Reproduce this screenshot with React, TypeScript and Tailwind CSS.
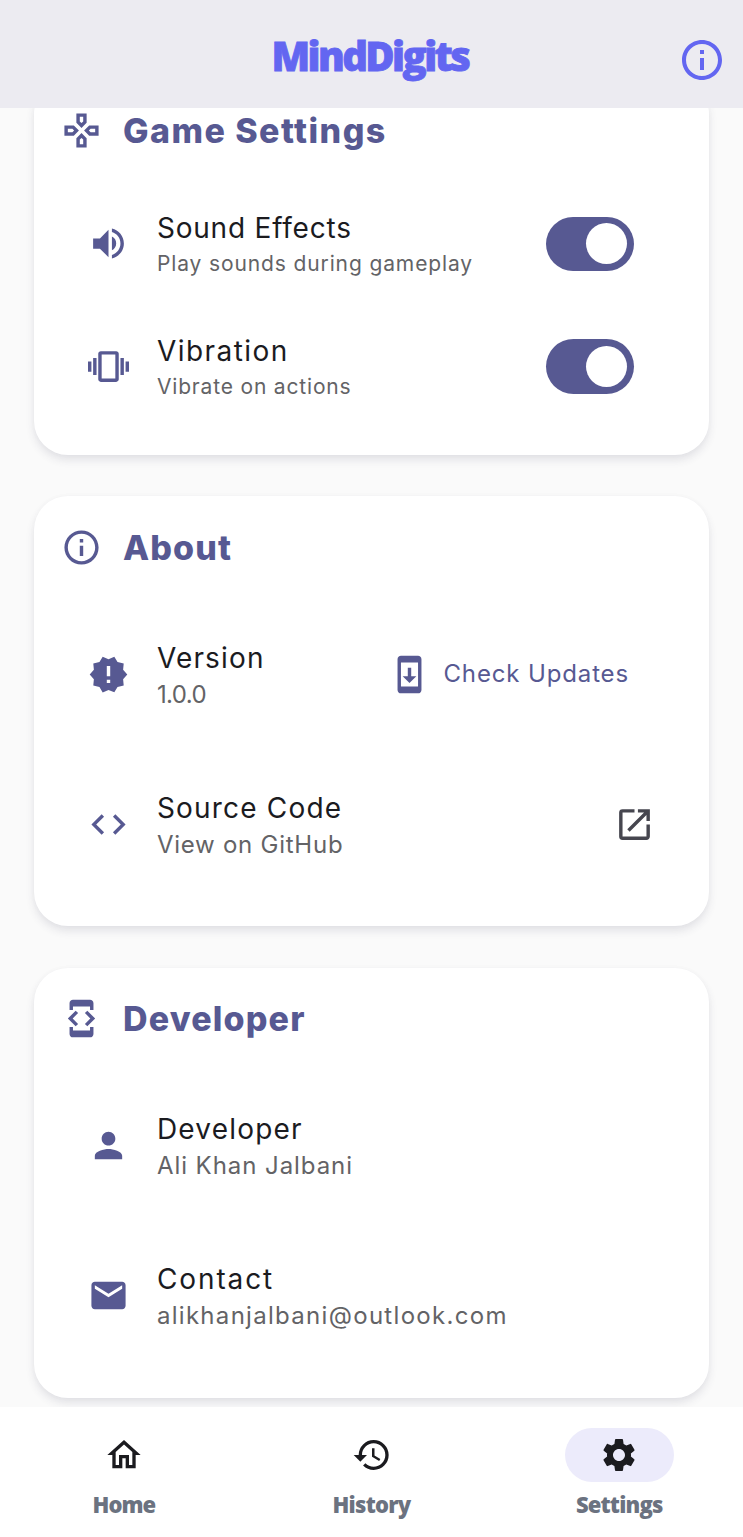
import type { ReactNode } from "react";
import {
  MdCode,
  MdDeveloperMode,
  MdEmail,
  MdHistory,
  MdInfoOutline,
  MdNewReleases,
  MdOpenInNew,
  MdOutlineGames,
  MdOutlineHome,
  MdPerson,
  MdSettings,
  MdSystemUpdate,
  MdVibration,
  MdVolumeUp,
} from "react-icons/md";

function Card({ icon, title, children }: { icon: ReactNode; title: ReactNode; children: ReactNode }) {
  return (
    <section className="rounded-[34px] bg-white px-[27px] pt-[27px] pb-[27px] shadow-[0_5px_9px_rgba(60,60,90,0.12),0_0_6px_rgba(60,60,90,0.02)]">
      <div className="mb-7 flex h-12 items-center gap-[21px] text-[41px] text-[#575992]">
        {icon}
        <h2 className="text-[34px] leading-[47px] font-extrabold">{title}</h2>
      </div>
      {children}
    </section>
  );
}

function Row({
  icon,
  title,
  subtitle,
  compact,
  action,
}: {
  icon: ReactNode;
  title: ReactNode;
  subtitle: ReactNode;
  compact?: boolean;
  action?: ReactNode;
}) {
  return (
    <div className={compact ? "flex h-[122.5px] items-center pl-[27.4px]" : "flex h-[150px] items-center pl-[27.4px]"}>
      <span className="text-[41px] text-[#575992]">{icon}</span>
      <div
        className={
          compact
            ? "ml-[27.5px] flex flex-1 flex-col pt-[2px] whitespace-nowrap"
            : "ml-[27.5px] flex flex-1 flex-col pt-[4px] whitespace-nowrap"
        }
      >
        <span className="text-[28px] leading-9 text-[#1b1b1f]">{title}</span>
        <span
          className={
            compact
              ? "mt-[3px] text-[21px] leading-[30px] text-[#636366]"
              : "mt-px text-[24px] leading-9 text-[#636366]"
          }
        >
          {subtitle}
        </span>
      </div>
      {action}
    </div>
  );
}

function Toggle() {
  return (
    <button
      role="switch"
      aria-checked="true"
      className="mr-12 flex h-[54.5px] w-[88.5px] items-center justify-end rounded-full bg-[#575992] pr-[7px]"
    >
      <span className="size-[41px] rounded-full bg-white" />
    </button>
  );
}

function Tab({ icon, label, active }: { icon: ReactNode; label: ReactNode; active?: boolean }) {
  return (
    <div className="flex flex-1 flex-col items-center">
      <span
        className={
          active
            ? "flex h-[54px] w-[109px] items-center justify-center rounded-full bg-[#ecebfb] text-[40px] text-[#1b1b1f]"
            : "flex h-[54px] w-[109px] items-center justify-center text-[40px] text-[#1b1b1f]"
        }
      >
        {icon}
      </span>
      <span className="mt-[6.5px] font-['Open_Sans',sans-serif] text-[22px] leading-[30px] font-extrabold text-[#6b7280]">
        {label}
      </span>
    </div>
  );
}

export default function App() {
  return (
    <div className="flex h-[1537px] w-[743px] flex-col overflow-hidden bg-[#fafafa] font-['Inter',sans-serif]">
      <header className="grid h-[107.5px] shrink-0 grid-cols-[1fr_auto_1fr] items-center bg-[#ecebf1] pt-3 text-[#6366f1]">
        <span />
        <h1 className="-mt-[8px] pr-[3px] font-['Open_Sans',sans-serif] text-[40px] leading-[56px] font-extrabold tracking-[-2.6px] [-webkit-text-stroke:0.8px_#6366f1]">
          MindDigits
        </h1>
        <MdInfoOutline className="mr-[17px] justify-self-end text-[48px]" />
      </header>

      <main className="min-h-0 flex-1 overflow-hidden">
        <div className="-mt-[27.8px] flex flex-col gap-[41.5px] px-[34px]">
          <Card icon={<MdOutlineGames />} title={<span className="tracking-[1.45px]">Game Settings</span>}>
            <Row
              compact
              icon={<MdVolumeUp />}
              title={<span className="tracking-[0.8px]">Sound Effects</span>}
              subtitle={<span className="tracking-[0.88px]">Play sounds during gameplay</span>}
              action={<Toggle />}
            />
            <Row
              compact
              icon={<MdVibration />}
              title={<span className="tracking-[1.45px]">Vibration</span>}
              subtitle={<span className="tracking-[0.83px]">Vibrate on actions</span>}
              action={<Toggle />}
            />
          </Card>

          <Card icon={<MdInfoOutline />} title={<span className="tracking-[1.1px]">About</span>}>
            <Row
              icon={<MdNewReleases />}
              title={<span className="tracking-[1.15px]">Version</span>}
              subtitle={<span className="tracking-[-0.6px]">1.0.0</span>}
              action={
                <button className="mr-[53px] flex items-center gap-[13px] text-[#575992]">
                  <MdSystemUpdate className="text-[41px]" />
                  <span className="text-[24px] leading-9 tracking-[0.86px]">Check Updates</span>
                </button>
              }
            />
            <Row
              icon={<MdCode />}
              title={<span className="tracking-[1.2px]">Source Code</span>}
              subtitle={<span className="tracking-[0.75px]">View on GitHub</span>}
              action={<MdOpenInNew className="mr-[27.5px] text-[41px] text-[#46464f]" />}
            />
          </Card>

          <Card icon={<MdDeveloperMode />} title={<span className="tracking-[1.15px]">Developer</span>}>
            <Row
              icon={<MdPerson />}
              title={<span className="tracking-[1.2px]">Developer</span>}
              subtitle={<span className="tracking-[0.94px]">Ali Khan Jalbani</span>}
            />
            <Row
              icon={<MdEmail />}
              title={<span className="tracking-[1.9px]">Contact</span>}
              subtitle={<span className="tracking-[1.3px]">alikhanjalbani@outlook.com</span>}
            />
          </Card>
        </div>
      </main>

      <nav className="flex h-[130px] shrink-0 bg-white pt-[21px]">
        <Tab icon={<MdOutlineHome />} label={<span className="tracking-[-0.96px]">Home</span>} />
        <Tab icon={<MdHistory />} label={<span className="tracking-[-0.75px]">History</span>} />
        <Tab active icon={<MdSettings />} label={<span className="tracking-[-0.82px]">Settings</span>} />
      </nav>
    </div>
  );
}
